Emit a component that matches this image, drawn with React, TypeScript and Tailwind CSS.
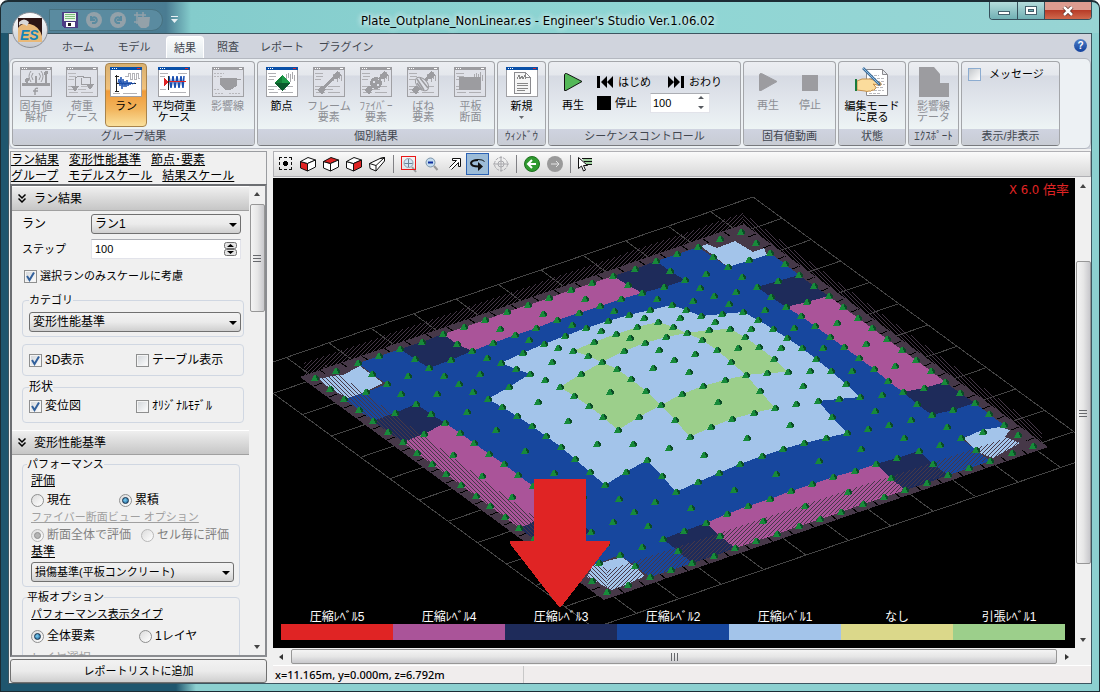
import type { ReactNode } from "react";
import clsx from "clsx";

/* ---------- ribbon icons ---------- */

function DocIcon({ off, children }: { off?: boolean; children?: ReactNode }) {
  return (
    <svg width="32" height="30" viewBox="0 0 32 30" shapeRendering="crispEdges">
      <rect x="0.5" y="0.5" width="31" height="29" fill={off ? "#dfe1e8" : "#fff"} stroke="#a0a0a4" />
      <rect width="32" height="3" fill={off ? "#9c9ca0" : "#0a50a8"} />
      <path d="M2 1h1v1h-1zM4 1h1v1h-1zM6 1h1v1h-1z" fill="#fff" />
      <rect x="27" y="1" width="3" height="1" fill={off ? "#fff" : "#e02424"} />
      {children}
    </svg>
  );
}

const textLines = "M2 6.5h8M3 9.5h7M2 12.5h6M2 19.5h9M15 19.5h12M2 22.5h6M12 22.5h8M3 25.5h9M15 25.5h12";

function RibbonIcon({ name, off }: { name: string; off?: boolean }) {
  const g = "#9c9ca0";
  if (name === "eigen")
    return (
      <DocIcon off>
        <path d="M2 16h28v3H2zM6 12h2v6H6zM15 9h2v9h-2zM25 6h2v12h-2z" fill={g} />
        <circle cx="7" cy="13" r="2" fill={g} />
        <circle cx="26" cy="6" r="2" fill={g} />
        <g fill="none" stroke={g} shapeRendering="auto">
          <path d="M13 6q-3 3 0 7M11 4q-4 5 0 11M19 6q3 3 0 7M21 4q4 5 0 11" />
          <path d="M18 21.500q-3-1-3 2V28M13 24h5" strokeWidth="1.500" />
        </g>
      </DocIcon>
    );
  if (name === "load")
    return (
      <DocIcon off>
        <path d={textLines} stroke="#b8b8bc" fill="none" />
        <path d="M9 20V11q5-3 9-1M15 11v6h9v-7h-7M24 10v10" fill="none" stroke={g} />
        <path d="M5 19h8l-4 6zM20 17h8l-4 6z" fill={g} />
      </DocIcon>
    );
  if (name === "run")
    return (
      <DocIcon>
        <path d="M15 9.500h3v-3h2v6h2v-6h2v6h2v-6h2v5h2M3 26.500h7M13 26.500h14" fill="none" stroke="#b4b4b8" />
        <path d="M6.500 8v16M5 9.500h4M5 24.500h4M7 16.500h19" fill="none" stroke="#222" />
        <path
          d="M8 16l1-4 1 7 1-9 1 12 1-10 1 8 1-6 1 6 1-7 1 6 1-4 1 3 1-3 1 2 3-1"
          fill="none"
          stroke="#1a4fb0"
          shapeRendering="auto"
        />
      </DocIcon>
    );
  if (name === "avg")
    return (
      <DocIcon>
        <path d="M2 6.500h8M2 9.500h5M20 6.500h9M2 22.500h6M12 25.500h16" fill="none" stroke="#b4b4b8" />
        <path
          d="M11 9l2 12 2-12 2 12 2-12 2 12 2-12 2 12 1-12"
          fill="none"
          stroke="#1a4fb0"
          strokeWidth="1.500"
          shapeRendering="auto"
        />
        <path d="M10.500 9v14" stroke="#222" fill="none" />
        <path d="M6 11l5 4-5 4z" fill="#e02424" />
        <path d="M11 14.500h17" stroke="#e02424" />
      </DocIcon>
    );
  if (name === "influence")
    return (
      <DocIcon off>
        <path d="M2 6.500h10M2 9.500h8M2 22.500h6M3 26.500h9M17 26.500h12" stroke="#b8b8bc" strokeDasharray="2 1" />
        <path d="M8 11h17v8l-7 4h-5l-5-5z" fill={g} />
        <path d="M25 12.500h4" stroke={g} />
      </DocIcon>
    );
  if (name === "new")
    return (
      <DocIcon>
        <path d="M8.500 5.500h11l5 5v16h-16zM19.500 5.500v5h5" fill="#f6f6f6" stroke="#8a8a8e" />
        <path d="M11 12l2-4 1 4 2-3 1 3 2-4v4M11 16.500h11M11 18.500h11M11 21.500h11M11 23.500h8" fill="none" stroke="#888" />
      </DocIcon>
    );
  return (
    <DocIcon off={off}>
      <path d={textLines} stroke="#b0b0b4" fill="none" />
      <path d="M20.500 7v7M22.500 6v5M24.500 7v8M26.500 5v7M28.500 8v6" stroke="#aaaaae" />
      {name === "node" && (
        <>
          <path d="M16 8l8 8-8 8-8-8z" fill="#0b5a2c" />
          <path d="M16 8l8 8h-8z" fill="#1d9a48" />
          <path d="M16 8v8H8z" fill="#138038" />
        </>
      )}
      {(name === "frame" || name === "fiber" || name === "spring") && (
        <>
          <path d="M9 22L23 9" stroke={g} strokeWidth="3" />
          <path d="M4 23l4-4 5 3-4 6zM20 8l4-4 4 4-4 5z" fill={g} />
        </>
      )}
      {name === "fiber" && (
        <>
          <circle cx="16" cy="16" r="6" fill={g} />
          <path d="M13 14h2v2h-2zM17 17h2v2h-2zM18 12h1v1h-1z" fill="#dfe1e8" />
        </>
      )}
      {name === "spring" && (
        <g shapeRendering="auto">
          <ellipse cx="15" cy="17" rx="8" ry="5" transform="rotate(45 15 17)" fill="#dfe1e8" stroke={g} />
          <path d="M10 12l7 11M13 11l8 10M10 16l5 7" fill="none" stroke={g} strokeWidth="1.500" />
        </g>
      )}
      {name === "plate" && <path d="M5 10h22v13H5z" fill={g} />}
    </DocIcon>
  );
}

function Play({ off }: { off?: boolean }) {
  return (
    <svg width="20" height="20" viewBox="0 0 20 20">
      <path d="M1.500 2.500q0-1 2-1L19 9.500 3 18.500H1.500z" fill={off ? "#9c9ca0" : "#54b858"} stroke={off ? "#9c9ca0" : "#111"} />
    </svg>
  );
}

/* ---------- ribbon ---------- */

function Group({ title, className, children }: { title: string; className: string; children: ReactNode }) {
  return (
    <section
      className={clsx(
        "flex shrink-0 flex-col overflow-hidden rounded border border-[#a4a6aa] border-b-[#77797d] bg-[linear-gradient(#eceef2_0,#e4e7ec_13px,#d6dae3_14px,#e6ebf0_50px,#eef5f5_68px)]",
        className
      )}
    >
      <div className="flex flex-1">{children}</div>
      <h2 className="h-4 whitespace-nowrap bg-linear-to-b from-[#cfd3e0] to-[#c8ccd4] text-center text-[11px] leading-[14px] text-[#41464f]">
        {title}
      </h2>
    </section>
  );
}

type ToolProps = {
  icon: string;
  lines: string[];
  off?: boolean;
  active?: boolean;
  menu?: boolean;
  className?: string;
};

function Tool({ icon, lines, off, active, menu, className }: ToolProps) {
  return (
    <button
      disabled={off}
      className={clsx(
        "mt-px mb-0.5 flex flex-col items-center whitespace-nowrap rounded-sm border pt-[3px] text-[11px] leading-[11px]",
        off ? "text-[#8c8e94]" : "text-black",
        active
          ? "border-[#a8844c] bg-[linear-gradient(#d8b070_0,#f2c27c_25px,#f09a38_27px,#f2b45c_45px,#fbe6a4_64px)]"
          : "border-transparent",
        className
      )}
    >
      <RibbonIcon name={icon} off={off} />
      <span className="mt-1">{lines[0]}</span>
      <span>{lines[1]}</span>
      {menu && (
        <svg width="5" height="3" viewBox="0 0 5 3" className="mt-1">
          <path d="M0 0h5L2.500 3z" fill="#666a70" />
        </svg>
      )}
    </button>
  );
}

function Ribbon() {
  return (
    <div className="flex h-[91px] gap-0.5 overflow-hidden rounded-md border border-[#b4b8c0] bg-[#edf1f4] px-0.5 py-0.5">
      <Group title="グループ結果" className="w-[243px]">
        <Tool icon="eigen" lines={["固有値", "解析"]} off className="w-[46px]" />
        <Tool icon="load" lines={["荷重", "ケース"]} off className="w-[46px]" />
        <Tool icon="run" lines={["ラン"]} active className="w-[42px]" />
        <Tool icon="avg" lines={["平均荷重", "ケース"]} className="w-[54px]" />
        <Tool icon="influence" lines={["影響線"]} off className="flex-1" />
      </Group>
      <Group title="個別結果" className="w-[238px]">
        <Tool icon="node" lines={["節点"]} className="flex-1" />
        <Tool icon="frame" lines={["フレーム", "要素"]} off className="flex-1" />
        <Tool icon="fiber" lines={["ﾌｧｲﾊﾞｰ", "要素"]} off className="flex-1" />
        <Tool icon="spring" lines={["ばね", "要素"]} off className="flex-1" />
        <Tool icon="plate" lines={["平板", "断面"]} off className="flex-1" />
      </Group>
      <Group title="ｳｨﾝﾄﾞｳ" className="w-[49px]">
        <Tool icon="new" lines={["新規"]} menu className="flex-1" />
      </Group>
      <Group title="シーケンスコントロール" className="w-[193px]">
        <button className="flex w-12 flex-col items-center pt-2.5 text-[11px] leading-[11px]">
          <Play />
          <span className="mt-2">再生</span>
        </button>
        <div className="flex flex-1 flex-col gap-px pt-2.5 text-[11px] leading-5">
          <div className="flex">
            <button className="flex w-[71px] items-center gap-1 whitespace-nowrap">
              <svg width="17" height="12" viewBox="0 0 17 12">
                <path d="M0 0h3v12H0zM4 6l6-6v12zM10 6l6-6v12z" />
              </svg>
              はじめ
            </button>
            <button className="flex items-center gap-1 whitespace-nowrap">
              <svg width="17" height="12" viewBox="0 0 17 12">
                <path d="M13 0h3v12h-3zM12 6L6 0v12zM6 6L0 0v12z" />
              </svg>
              おわり
            </button>
          </div>
          <div className="flex">
            <button className="flex w-[53px] items-center gap-1 whitespace-nowrap">
              <span className="size-[14px] bg-black" />
              停止
            </button>
            <div className="flex w-[60px] items-center border border-[#e2e3ea] border-t-[#abadb3] bg-white">
              <input aria-label="シーケンス" defaultValue="100" className="w-0 flex-1 pl-0.5 text-[11px] leading-4 outline-none" />
              <svg width="16" height="16" viewBox="0 0 16 16" fill="#55585e">
                <path d="M5 4l3-3 3 3zM5 11h6l-3 3z" />
              </svg>
            </div>
          </div>
        </div>
      </Group>
      <Group title="固有値動画" className="w-[93px]">
        <button disabled className="flex w-12 flex-col items-center pt-2.5 text-[11px] leading-[11px] text-[#8c8e94]">
          <Play off />
          <span className="mt-2">再生</span>
        </button>
        <button disabled className="flex w-9 flex-col items-center pt-[13px] text-[11px] leading-[11px] text-[#8c8e94]">
          <span className="size-4 bg-[#9c9ca0]" />
          <span className="mt-[9px]">停止</span>
        </button>
      </Group>
      <Group title="状態" className="w-[68px]">
        <button className="flex flex-1 flex-col items-center whitespace-nowrap pt-[5px] text-[11px] leading-[11px]">
          <svg width="34" height="30" viewBox="0 0 34 30">
            <path d="M11.500 2.500h16l5 5v21h-21zM27.500 2.500v5h5" fill="#fff" stroke="#8a8a8e" />
            <path d="M15 8.500h9M14 11.500h16M14 14.500h16M20 17.500h10M17 20.500h12M15 23.500h14M14 26.500h12" stroke="#b8b8bc" strokeDasharray="3 1" />
            <path
              d="M2 14l5-2 8 0q4 1 9 3 3 1 2 3-1 1-4 0l-4-1 2 2q2 2 0 3-1 2-3 1-1 2-3 1-2 1-4 0l-8-1z"
              fill="#fbdc9c"
              stroke="#c4904c"
            />
            <path d="M0 12h2v12H0z" fill="#1a7a3c" />
            <path d="M8 1l17 17" stroke="#3c6c9c" strokeWidth="2.500" />
            <path d="M8 1l16 16" stroke="#8cbcdc" />
          </svg>
          <span className="mt-1">編集モード</span>
          <span>に戻る</span>
        </button>
      </Group>
      <Group title="ｴｸｽﾎﾟｰﾄ" className="w-[51px]">
        <button disabled className="flex flex-1 flex-col items-center pt-[5px] text-[11px] leading-[11px] text-[#8c8e94]">
          <svg width="30" height="30" viewBox="0 0 30 30">
            <path d="M0 0h15l6 7v9h9v14H0z" fill="#9c9ca0" />
          </svg>
          <span className="mt-1">影響線</span>
          <span>データ</span>
        </button>
      </Group>
      <Group title="表示/非表示" className="w-[99px]">
        <label className="flex h-6 items-center gap-2 pl-1.5 text-[11px]">
          <input
            type="checkbox"
            className="size-[13px] appearance-none border border-[#8cacd0] bg-linear-to-br from-[#c4c8cc] to-white"
          />
          メッセージ
        </label>
      </Group>
    </div>
  );
}

/* ---------- side panel controls ---------- */

function Check({ label, checked }: { label: string; checked?: boolean }) {
  return (
    <label className="flex h-4 items-center gap-[3px] whitespace-nowrap">
      <span className="relative size-[13px]">
        <input
          type="checkbox"
          defaultChecked={checked}
          className="peer block size-[13px] appearance-none border border-[#8e8f8f] bg-linear-to-br from-[#d0d4d8] to-white shadow-[inset_0_0_0_1px_#f4f4f4]"
        />
        <svg viewBox="0 0 13 13" className="pointer-events-none absolute inset-0 hidden peer-checked:block">
          <path d="M3 6l2.500 4L10 2.500" fill="none" stroke="#31609c" strokeWidth="2" />
        </svg>
      </span>
      {label}
    </label>
  );
}

function Radio({ name, label, checked, off }: { name: string; label: string; checked?: boolean; off?: boolean }) {
  return (
    <label className={clsx("flex h-4 items-center gap-[3px] whitespace-nowrap", off && "text-[#808080]")}>
      <span className="relative size-[13px]">
        <input
          type="radio"
          name={name}
          defaultChecked={checked}
          disabled={off}
          className={clsx(
            "peer block size-[13px] appearance-none rounded-full border bg-linear-to-br from-[#dcdcdc] to-white",
            off ? "border-[#b8b8b8]" : "border-[#8e8f8f]"
          )}
        />
        <span
          className={clsx(
            "pointer-events-none absolute inset-[3px] hidden rounded-full border peer-checked:block",
            off ? "border-[#909090] bg-[#b4b4b4]" : "border-[#12304c] bg-[radial-gradient(circle_at_40%_40%,#7cd0f4,#1c5c90)]"
          )}
        />
      </span>
      {label}
    </label>
  );
}

function Select({ label, value, className }: { label: string; value: string; className?: string }) {
  return (
    <div className={clsx("relative h-5", className)}>
      <select
        aria-label={label}
        className="block h-5 w-full appearance-none rounded-[3px] border border-[#707070] bg-linear-to-b from-[#f2f2f2] via-[#ebebeb] to-[#cfcfcf] pl-[3px] leading-4 text-black"
      >
        <option>{value}</option>
      </select>
      <svg width="8" height="4" viewBox="0 0 8 4" className="pointer-events-none absolute top-[9px] right-1">
        <path d="M0 0h8L4 4z" />
      </svg>
    </div>
  );
}

function SectionHeader({ title }: { title: string }) {
  return (
    <button className="flex h-[25px] w-full items-center gap-2 border-y border-t-white border-b-[#a0a0a0] bg-linear-to-b from-[#efefef] to-[#c6c6c6] pl-1.5">
      <svg width="8" height="9" viewBox="0 0 8 9" fill="none" stroke="#000">
        <path d="M0.500 0.500L4 4 7.500 0.500M0.500 4.500L4 8 7.500 4.500" strokeWidth="1.500" />
      </svg>
      {title}
    </button>
  );
}

const jumpLinks = [
  ["ラン結果", "変形性能基準", "節点･要素"],
  ["グループ", "モデルスケール", "結果スケール"],
];

function SidePanel() {
  return (
    <aside className="flex w-[257px] shrink-0 flex-col bg-[#f0f0f0] text-[12px] leading-4">
      <nav className="border border-b-0 border-[#9a9ca0] bg-[#f0f0f0]">
        {jumpLinks.map((row) => (
          <div key={row[0]} className="flex gap-2.5 whitespace-nowrap">
            {row.map((l) => (
              <a key={l} href="#" className="underline">
                {l}
              </a>
            ))}
          </div>
        ))}
      </nav>
      <div className="flex min-h-0 flex-1 border-2 border-[#8a8c90] border-t-[#6c6e72] border-l-[#6c6e72]">
        <div className="min-w-0 flex-1 overflow-hidden">
          <SectionHeader title="ラン結果" />
          <div className="mt-[3px] flex h-5 items-center pr-2 pl-2.5">
            <span className="w-[69px]">ラン</span>
            <Select label="ラン" value="ラン1" className="flex-1" />
          </div>
          <div className="mt-[5px] flex h-5 items-center pr-2 pl-2.5">
            <label htmlFor="step" className="w-[69px] text-[11px]">
              ステップ
            </label>
            <div className="flex h-5 flex-1 items-center border border-[#e2e3ea] border-t-[#abadb3] bg-white pr-[3px]">
              <input id="step" defaultValue="100" className="w-0 flex-1 pl-[3px] text-[11px] leading-4 outline-none" />
              <svg width="13" height="14" viewBox="0 0 13 14">
                <rect x="0.500" y="0.500" width="12" height="6" rx="2" fill="#e4e4e4" stroke="#707070" />
                <rect x="0.500" y="7.500" width="12" height="6" rx="2" fill="#e4e4e4" stroke="#707070" />
                <path d="M3 5l3.500-3L10 5zM3 9h7l-3.500 3z" />
              </svg>
            </div>
          </div>
          <div className="mt-[9px] pl-3 text-[11px]">
            <Check label="選択ランのみスケールに考慮" checked />
          </div>
          <fieldset className="mt-2 mr-[5px] ml-2.5 rounded border border-[#d0d7e2] px-0.5 pb-1 pl-1.5">
            <legend className="text-[11px]">カテゴリ</legend>
            <Select label="カテゴリ" value="変形性能基準" className="mt-1" />
          </fieldset>
          <div className="mt-[7px] mr-[5px] ml-2.5 grid h-8 grid-cols-2 items-center rounded border border-[#d0d7e2] pl-1.5">
            <Check label="3D表示" checked />
            <Check label="テーブル表示" />
          </div>
          <fieldset className="mt-[3px] mr-[5px] ml-2.5 rounded border border-[#d0d7e2] pb-2 pl-1.5">
            <legend>形状</legend>
            <div className="mt-[3px] grid grid-cols-2">
              <Check label="変位図" checked />
              <Check label="ｵﾘｼﾞﾅﾙﾓﾃﾞﾙ" />
            </div>
          </fieldset>
          <div className="mt-[7px]">
            <SectionHeader title="変形性能基準" />
          </div>
          <fieldset className="mt-px mr-[9px] ml-2.5 rounded border border-[#d0d7e2] pr-[5px] pb-1 pl-2">
            <legend className="-ml-1 text-[11px]">パフォーマンス</legend>
            <div className="mt-px underline">評価</div>
            <div className="mt-[3px] flex gap-12">
              <Radio name="eval" label="現在" />
              <Radio name="eval" label="累積" checked />
            </div>
            <div className="mt-px whitespace-nowrap text-[11px] text-[#a0a0a0] underline">ファイバー断面ビュー オプション</div>
            <div className="mt-0.5 flex gap-2.5">
              <Radio name="fiber" label="断面全体で評価" checked off />
              <Radio name="fiber" label="セル毎に評価" off />
            </div>
            <div className="mt-px underline">基準</div>
            <Select label="基準" value="損傷基準(平板コンクリート)" className="mt-0.5 text-[11px]" />
          </fieldset>
          <fieldset className="mt-0.5 mr-[9px] ml-2.5 rounded border border-[#d0d7e2] pl-2">
            <legend className="-ml-1 text-[11px]">平板オプション</legend>
            <div className="mt-px text-[11px] underline">パフォーマンス表示タイプ</div>
            <div className="mt-1.5 flex gap-11">
              <Radio name="type" label="全体要素" checked />
              <Radio name="type" label="1レイヤ" />
            </div>
            <div className="mt-1.5 text-[#a0a0a0]">レイヤ選択</div>
          </fieldset>
        </div>
        <VScroll thumb="mt-0.5 h-[108px]" />
      </div>
      <button className="mt-0.5 h-6 rounded-[3px] border border-[#707070] bg-linear-to-b from-[#f2f2f2] via-[#ebebeb] to-[#cfcfcf] text-[11px]">
        レポートリストに追加
      </button>
    </aside>
  );
}

function VScroll({ thumb }: { thumb: string }) {
  return (
    <div className="flex w-4 shrink-0 flex-col items-center bg-[#f0f0f0]">
      <svg width="16" height="16" viewBox="0 0 16 16" className="shrink-0">
        <path d="M5 10l3-4 3 4z" fill="#444" />
      </svg>
      <div
        className={clsx(
          "flex w-[15px] flex-col items-center justify-center gap-px rounded-xs border border-[#979797] bg-linear-to-r from-[#f4f4f4] via-[#e6e6e6] to-[#c8c8cc]",
          thumb
        )}
      >
        <Grip />
      </div>
      <svg width="16" height="16" viewBox="0 0 16 16" className="mt-auto shrink-0">
        <path d="M5 6h6l-3 4z" fill="#444" />
      </svg>
    </div>
  );
}

function Grip({ upright }: { upright?: boolean }) {
  return (
    <svg width="8" height="8" viewBox="0 0 8 8" stroke="#66686c" shapeRendering="crispEdges">
      <path d={upright ? "M1.500 0v8M4.500 0v8M7.500 0v8" : "M0 1.500h8M0 4.500h8M0 7.500h8"} />
    </svg>
  );
}

/* ---------- view toolbar ---------- */

function Cube({ face }: { face?: "front" | "top" | "side" }) {
  return (
    <svg width="17" height="15" viewBox="0 0 17 15" strokeLinejoin="round" stroke="#111">
      <path d="M0.500 4.500L7.500 6.500V14L0.500 11z" fill={face === "front" ? "#e02424" : "#fff"} />
      <path d="M0.500 4.500L8 0.500 15.500 3 7.500 6.500z" fill={face === "top" ? "#e02424" : "#fff"} />
      <path d="M7.500 6.500L15.500 3V10L7.500 14z" fill={face === "side" ? "#e02424" : "#fff"} />
    </svg>
  );
}

function ViewButton({ label, active, children }: { label: string; active?: boolean; children: ReactNode }) {
  return (
    <button
      aria-label={label}
      className={clsx(
        "flex h-[22px] w-[23px] items-center justify-center border",
        active ? "border-[#2c62b4] bg-[#9cbcd8]" : "border-transparent"
      )}
    >
      {children}
    </button>
  );
}

function Separator() {
  return (
    <div className="flex h-[18px] w-2 justify-center">
      <div className="w-px bg-[#808084]" />
    </div>
  );
}

function ViewToolbar() {
  return (
    <div className="flex h-[26px] shrink-0 items-center border border-[#b0b0b4] bg-linear-to-b from-[#fafafa] to-[#d9d9d9]">
      <ViewButton label="全体表示">
        <svg width="14" height="14" viewBox="0 0 14 14" shapeRendering="crispEdges">
          <path d="M0.500 3V0.500H3M5 0.500h3M10 0.500h2.500V3M12.500 5v3M12.500 10v2.500H10M8 12.500H5M3 12.500H0.500V10M0.500 8V5" fill="none" stroke="#111" />
          <path d="M5 4h3v1h1v3h-1v1h-3v-1h-1v-3h1z" />
        </svg>
      </ViewButton>
      <ViewButton label="正面"><Cube face="front" /></ViewButton>
      <ViewButton label="上面"><Cube face="top" /></ViewButton>
      <ViewButton label="側面"><Cube face="side" /></ViewButton>
      <ViewButton label="透視">
        <svg width="17" height="15" viewBox="0 0 17 15" fill="#fff" stroke="#111" strokeLinejoin="round">
          <path d="M0.500 6.500L11 1.500 15.500 0.500V4L7 14 1 11.500z" />
          <path d="M0.500 6.500L7 8.500V14M7 8.500L15.500 0.500M11 1.500L15.500 0.500" fill="none" />
        </svg>
      </ViewButton>
      <Separator />
      <ViewButton label="範囲拡大">
        <svg width="16" height="17" viewBox="0 0 16 17" fill="none">
          <circle cx="7.500" cy="7" r="4.500" fill="#d4e6f4" stroke="#8ca0b0" />
          <path d="M7.500 3v8M3.500 7.500h8" stroke="#6c8494" />
          <path d="M11 11l4 5" stroke="#999" strokeWidth="2" />
          <path d="M0 0h15v14H0zM1 1v12h13V1z" fill="#e81818" fillRule="evenodd" />
        </svg>
      </ViewButton>
      <ViewButton label="縮小">
        <svg width="14" height="14" viewBox="0 0 14 14" fill="none">
          <circle cx="5.500" cy="5.500" r="4.500" fill="#c4dcf0" stroke="#7c94a8" />
          <path d="M3 5.500h5" stroke="#0c2c9c" strokeWidth="2" />
          <path d="M9 9l3.500 4" stroke="#999" strokeWidth="2" />
        </svg>
      </ViewButton>
      <ViewButton label="移動">
        <svg width="12" height="12" viewBox="0 0 12 12" fill="#fff" stroke="#111">
          <path d="M0.500 9.500L7.500 2.500H3.500V0.500H11.500V8.500H9.500V4.500L2.500 11.500" />
        </svg>
      </ViewButton>
      <ViewButton label="回転" active>
        <svg width="16" height="13" viewBox="0 0 16 13" fill="none">
          <path d="M8 2q-6 0-7 3 0 3.500 8 3.500" stroke="#111" strokeWidth="2" />
          <path d="M8 4l5 4.500-5 4.500z" fill="#111" />
          <path d="M8 1.500q5 0 6.500 2" stroke="#111" />
        </svg>
      </ViewButton>
      <ViewButton label="中心">
        <svg width="16" height="16" viewBox="0 0 16 16" fill="none" stroke="#a8a8ac">
          <circle cx="8" cy="8" r="6.500" strokeDasharray="3 1" />
          <circle cx="8" cy="8" r="3" />
          <path d="M8 0v16M0 8h16" />
        </svg>
      </ViewButton>
      <Separator />
      <ViewButton label="戻る">
        <svg width="16" height="16" viewBox="0 0 16 16">
          <circle cx="8" cy="8" r="7.500" fill="#2f9a2f" stroke="#1e701e" />
          <path d="M12 8H5M8 4L4 8l4 4" fill="none" stroke="#fff" strokeWidth="2" />
        </svg>
      </ViewButton>
      <ViewButton label="進む">
        <svg width="16" height="16" viewBox="0 0 16 16">
          <circle cx="8" cy="8" r="8" fill="#9a9a9a" />
          <path d="M4 8h8M9 5l3 3-3 3" fill="none" stroke="#e4e4e4" />
        </svg>
      </ViewButton>
      <Separator />
      <ViewButton label="選択">
        <svg width="15" height="15" viewBox="0 0 15 15">
          <path d="M4 1.500h10M6 4.500h8M8 7.500h6" stroke="#111" />
          <path d="M5 3h9M7 6h7" stroke="#4cb04c" />
          <path d="M0.500 0.500v11l3-2.500 2 5 2-1-2-4.500h4z" fill="#fff" stroke="#111" />
        </svg>
      </ViewButton>
    </div>
  );
}

/* ---------- plate model ---------- */

const BLUE = "#17479e";
const NAVY = "#1e2b5a";
const MAGENTA = "#aa5499";
const LIGHT = "#a3c4ea";
const GREEN = "#9ccf8b";
const FRAME = "#463848";

// node grid is 20 x 20, u runs left -> top, v runs left -> bottom
function project(u: number, v: number): [number, number] {
  const su = Math.max(Math.sin((Math.PI * u) / 20), 0);
  const sv = Math.max(Math.sin((Math.PI * v) / 20), 0);
  const lift = 52 * Math.pow(su, 1.8) * Math.pow(sv, 1.8);
  return [Math.round(315 + 21.3 * u + 14.6 * v), Math.round(378 - 7.3 * u + 10.7 * v - lift)];
}

const pts = (list: number[][]) => list.map((p) => p.join(",")).join(" ");

function cellColor(i: number, j: number) {
  const border = (n: number) => n === 0 || n === 9;
  if (border(i) && border(j)) return FRAME;
  if (border(i) || border(j)) {
    const k = border(i) ? j : i;
    if (k === 1 || k === 8) return BLUE;
    if (k === 2 || k === 7) return NAVY;
    return MAGENTA;
  }
  const inside = (n: number) => n >= 2 && n <= 7;
  const ring = (n: number) => n === 2 || n === 7;
  if (!inside(i) || !inside(j) || (ring(i) && ring(j))) return BLUE;
  const third = (n: number) => n === 3 || n === 6;
  const mid = (n: number) => n === 4 || n === 5;
  if ((third(i) && mid(j)) || (mid(i) && third(j))) return GREEN;
  return LIGHT;
}

const cells: { key: string; points: string; fill: string }[] = [];
for (let i = 0; i < 10; i++) {
  for (let j = 0; j < 10; j++) {
    const u = i * 2;
    const v = j * 2;
    cells.push({
      key: `${i}-${j}`,
      fill: cellColor(i, j),
      points: pts([
        project(u, v), project(u + 1, v), project(u + 2, v), project(u + 2, v + 1),
        project(u + 2, v + 2), project(u + 1, v + 2), project(u, v + 2), project(u, v + 1),
      ]),
    });
  }
}

const nodes: [number, number][] = [];
for (let u = 0; u <= 20; u++) {
  for (let v = 0; v <= 20; v++) {
    if (u % 2 === 0 || v % 2 === 0) nodes.push(project(u, v));
  }
}

const gridPath = Array.from({ length: 13 }, (_, k) => {
  const t = k / 12;
  return (
    `M${244 + 509 * t} ${372 - 175 * t}l350 256` + `M${244 + 350 * t} ${372 + 256 * t}l509 -175`
  );
}).join("");

// short dark gaps that split the frame band at every half step
const bandGaps = Array.from({ length: 20 }, (_, k) => {
  const n = k + 0.5;
  const seg = (x: number, y: number, dx: number, dy: number) => `M${x} ${y}l${dx} ${dy}`;
  const [ax, ay] = project(n, 0);
  const [bx, by] = project(20, n);
  const [cx, cy] = project(n, 20);
  const [dx, dy] = project(0, n);
  return seg(ax, ay, -6, -4) + seg(bx, by, 8, -3) + seg(cx, cy, 6, 5) + seg(dx, dy, -8, 3);
}).join("");

const cornerPatches = [
  "318,379 337,375 343,375 360,366 383,383 365,392 348,398 332,390",
  "701,246 707,244 717,248 735,241 753,252 764,248 767,255 728,267",
  "964,438 982,430 1000,427 1010,430 1005,437 1020,443 1004,452 993,458 977,452",
  "593,565 622,557 635,567 645,576 630,583 612,590 587,577",
];

function PlateModel() {
  const o = 0.42;
  return (
    <svg viewBox="273 178 802 470" preserveAspectRatio="xMidYMid slice" className="block size-full" shapeRendering="crispEdges">
      <defs>
        <pattern id="rise" width="4" height="4" patternUnits="userSpaceOnUse">
          <path d="M0 4L4 0M-1 1L1 -1M3 5L5 3" stroke={FRAME} />
        </pattern>
        <pattern id="fall" width="4" height="4" patternUnits="userSpaceOnUse">
          <path d="M0 0L4 4M-1 3L1 5M3 -1L5 1" stroke={FRAME} />
        </pattern>
        <g id="node">
          <path d="M-4 3L-1 -3L1 -3L4 1L3 3z" fill="#178a3a" />
          <path d="M1 -3L4 0L4 2L2 2z" fill="#0b4a26" />
        </g>
      </defs>
      <path d={gridPath} fill="none" stroke="#444444" />
      <polygon points={pts([project(-o, -o), project(20 + o, -o), project(20 + o, 20 + o), project(-o, 20 + o)])} fill={FRAME} />
      <path d={bandGaps} stroke="#000" fill="none" />
      {cells.map((c) => (
        <polygon key={c.key} points={c.points} fill={c.fill} />
      ))}
      {cornerPatches.map((p) => (
        <polygon key={p} points={p} fill={LIGHT} />
      ))}
      <polygon points="304,377 743,226 743,213 304,363" fill="url(#rise)" />
      <polygon points="743,226 1042,446 1042,430 743,213" fill="url(#fall)" />
      <polygon points="315,378 607,592 607,570 325,364" fill="url(#fall)" />
      <polygon points="607,592 1032,445 1024,432 607,570" fill="url(#rise)" />
      {nodes.map(([x, y]) => (
        <use key={`${x}-${y}`} href="#node" x={x} y={y} />
      ))}
      <path d="M535 479h50q1 0 1 1v61h23q2 1 0 4L561 607q-1 1-2 0L511 545q-2-3 0-4h23v-61q0-1 1-1z" fill="#e02424" />
    </svg>
  );
}

const legend = [
  { label: "圧縮ﾚﾍﾞﾙ5", color: "bg-[#e02424]" },
  { label: "圧縮ﾚﾍﾞﾙ4", color: "bg-[#aa5499]" },
  { label: "圧縮ﾚﾍﾞﾙ3", color: "bg-[#1e2b5a]" },
  { label: "圧縮ﾚﾍﾞﾙ2", color: "bg-[#17479e]" },
  { label: "圧縮ﾚﾍﾞﾙ1", color: "bg-[#a3c4ea]" },
  { label: "なし", color: "bg-[#dbd88a]" },
  { label: "引張ﾚﾍﾞﾙ1", color: "bg-[#9ccf8b]" },
];

function Viewport() {
  return (
    <main className="flex min-w-0 flex-1 flex-col">
      <ViewToolbar />
      <div className="mt-px flex min-h-0 flex-1">
        <div className="relative min-w-0 flex-1 overflow-hidden bg-black">
          <PlateModel />
          <div className="absolute top-1 right-1.5 font-['DejaVu_Sans_Condensed','Noto_Sans_CJK_JP',sans-serif] text-[13px] leading-4 text-[#e02424]">
            X 6.0 倍率
          </div>
          <div className="absolute right-2.5 bottom-2 left-2 flex">
            {legend.map((l) => (
              <div key={l.label} className="flex-1 text-center text-[12px] leading-[14px] text-white">
                {l.label}
                <div className={clsx("h-4", l.color)} />
              </div>
            ))}
          </div>
        </div>
        <VScroll thumb="mt-[67px] h-[303px]" />
      </div>
      <div className="flex h-[17px] shrink-0 items-center bg-[#f0f0f0] pr-4">
        <svg width="18" height="16" viewBox="0 0 18 16">
          <path d="M10 5v6L6 8z" fill="#333" />
        </svg>
        <div className="flex h-[15px] flex-1 items-center justify-center rounded-xs border border-[#979797] bg-linear-to-b from-[#f4f4f4] via-[#e6e6e6] to-[#c8c8cc]">
          <Grip upright />
        </div>
        <svg width="18" height="16" viewBox="0 0 18 16">
          <path d="M8 5v6l4-3z" fill="#333" />
        </svg>
      </div>
      <footer className="flex h-[18px] shrink-0 border-t border-white bg-[#f0eded]">
        <div className="w-[251px] whitespace-nowrap border-r border-[#c8c8c8] pl-0.5 font-['Noto_Sans',sans-serif] text-[11px] font-medium leading-[18px]">
          x=11.165m, y=0.000m, z=6.792m
        </div>
      </footer>
    </main>
  );
}

/* ---------- window ---------- */

function TitleBar() {
  return (
    <header className="relative flex h-[31px] shrink-0 items-center justify-center">
      <div className="absolute top-[7px] left-12 flex h-[22px] items-center gap-2 rounded-r-full border border-[#47717f] bg-[#5a8ba0] pr-3 pl-3">
        <button aria-label="保存">
          <svg width="16" height="16" viewBox="0 0 16 16" shapeRendering="crispEdges">
            <path d="M0 0h16v16H2L0 14z" fill="#4c3c84" />
            <path d="M2 1h12v8H2z" fill="#e8f4e4" />
            <path d="M3 2.500h10M3 4.500h10M3 6.500h10" stroke="#7cc078" />
            <path d="M4 10h9v5H4z" fill="#fff" />
            <path d="M6 11h3v3H6z" fill="#222" />
          </svg>
        </button>
        <button aria-label="元に戻す">
          <svg width="16" height="16" viewBox="0 0 16 16" fill="none" stroke="#5a8ba0" strokeWidth="2">
            <circle cx="8" cy="8" r="8" fill="#93a1a9" stroke="none" />
            <path d="M5 4v4h4M5 8q2-4 5-2 2 3-1 5H6" />
          </svg>
        </button>
        <button aria-label="やり直し">
          <svg width="16" height="16" viewBox="0 0 16 16" fill="none" stroke="#5a8ba0" strokeWidth="2">
            <circle cx="8" cy="8" r="8" fill="#93a1a9" stroke="none" />
            <path d="M11 4v4H7M11 8q-2-4-5-2-2 3 1 5h3" />
          </svg>
        </button>
        <button aria-label="モデル">
          <svg width="16" height="16" viewBox="0 0 16 16">
            <path d="M4 5h12l-1 9-3 2H7l-3-3z" fill="#93a1a9" />
            <path d="M0 3h12M0 10h5M3 0v12M9 0v6" stroke="#93a1a9" strokeWidth="1.500" />
          </svg>
        </button>
      </div>
      <button aria-label="カスタマイズ" className="absolute top-[14px] left-[170px]">
        <svg width="7" height="8" viewBox="0 0 7 8" fill="#e8f0f4">
          <path d="M0 0h7v1H0zM0 3h7L3.500 7z" />
        </svg>
      </button>
      <h1 className="whitespace-nowrap pt-1.5 pr-6 font-['DejaVu_Sans_Condensed','Noto_Sans',sans-serif] text-[13px] leading-4 [text-shadow:0_0_6px_#fff,0_0_6px_#fff]">
        Plate_Outplane_NonLinear.es - Engineer's Studio Ver.1.06.02
      </h1>
      <div className="absolute top-0 right-[7px] flex h-[18px] overflow-hidden rounded-b border border-t-0 border-[#36505c] text-white">
        <button aria-label="最小化" className="flex w-7 justify-center border-r border-[#36505c] bg-linear-to-b from-[#b4dcdc] to-[#70b0b4]">
          <span className="mt-[9px] h-1 w-3 border border-[#44606c] bg-white" />
        </button>
        <button aria-label="最大化" className="flex w-[27px] justify-center border-r border-[#36505c] bg-linear-to-b from-[#b4dcdc] to-[#70b0b4]">
          <span className="mt-1 h-[9px] w-3 border border-[#44606c] bg-white p-[2px]">
            <span className="block size-full border border-[#44606c] bg-[#70b0b4]" />
          </span>
        </button>
        <button aria-label="閉じる" className="flex w-[46px] items-center justify-center bg-linear-to-b from-[#dc9c90] from-45% via-[#b83c28] via-50% to-[#d0684c]">
          <svg width="12" height="10" viewBox="0 0 12 10">
            <path d="M2 1l8 8M10 1L2 9" stroke="#5c2c24" strokeWidth="4" />
            <path d="M2 1l8 8M10 1L2 9" stroke="#fff" strokeWidth="2.500" />
          </svg>
        </button>
      </div>
      <button aria-label="アプリケーション" className="absolute top-2.5 left-[11px] z-10 size-9 rounded-full border border-[#8c9098] bg-linear-to-b from-white to-[#c4c8d0] p-[5px]">
        <svg width="24" height="24" viewBox="0 0 24 24">
          <rect width="24" height="24" fill="#2c1414" />
          <path d="M0 24V10Q4 4 12 6q9 2 12 12v6z" fill="#e8b878" />
          <path d="M1 4q5-5 10 0l-2 4Q3 4 1 8z" fill="#d8d8d8" />
          <text x="2" y="22" fontSize="14" fontWeight="bold" fontStyle="italic" fontFamily="Liberation Sans" fill="#1484b8">
            ES
          </text>
        </svg>
      </button>
    </header>
  );
}

const tabs = [
  { label: "ホーム", width: "w-14" },
  { label: "モデル", width: "w-14" },
  { label: "結果", width: "w-[38px] ml-1", active: true },
  { label: "照査", width: "w-12" },
  { label: "レポート", width: "w-[60px]" },
  { label: "プラグイン", width: "w-[68px]" },
];

export default function App() {
  return (
    <div className="flex h-screen flex-col overflow-hidden rounded-t-lg border border-t-2 border-[#1c2c34] bg-[linear-gradient(90deg,#55849a_0,#4a7c92_165px,#84cccc_190px,#8fd6d4_60%,#98d4d4_100%)] font-['Liberation_Sans','Noto_Sans_CJK_JP',sans-serif] text-black">
      <TitleBar />
      <div className="flex min-h-0 flex-1 flex-col bg-[linear-gradient(90deg,#1f566e_0,#1f566e_175px,#8cd0d0_195px)] px-[7px] pb-[7px]">
        <div className="flex min-h-0 flex-1 flex-col border border-[#3c5560] bg-[#d0d4dd]">
          <div className="flex h-6 shrink-0 items-end pl-[41px]">
            {tabs.map((t) => (
              <button
                key={t.label}
                className={clsx(
                  "whitespace-nowrap text-[11px] text-[#41464f]",
                  t.width,
                  t.active
                    ? "h-[22px] rounded-t border border-b-0 border-white bg-linear-to-b from-[#fafcfc] to-[#e4eaee] leading-[18px]"
                    : "h-[22px] leading-[20px]"
                )}
              >
                {t.label}
              </button>
            ))}
            <button aria-label="ヘルプ" className="mr-1 mb-1.5 ml-auto size-[13px] rounded-full bg-linear-to-b from-[#5080c8] to-[#12409c] text-[10px] font-bold leading-[13px] text-white">
              ?
            </button>
          </div>
          <Ribbon />
          <div className="flex min-h-0 flex-1 gap-1.5 bg-[#f0f0f0] pt-0.5 pl-px">
            <SidePanel />
            <Viewport />
          </div>
        </div>
      </div>
    </div>
  );
}
